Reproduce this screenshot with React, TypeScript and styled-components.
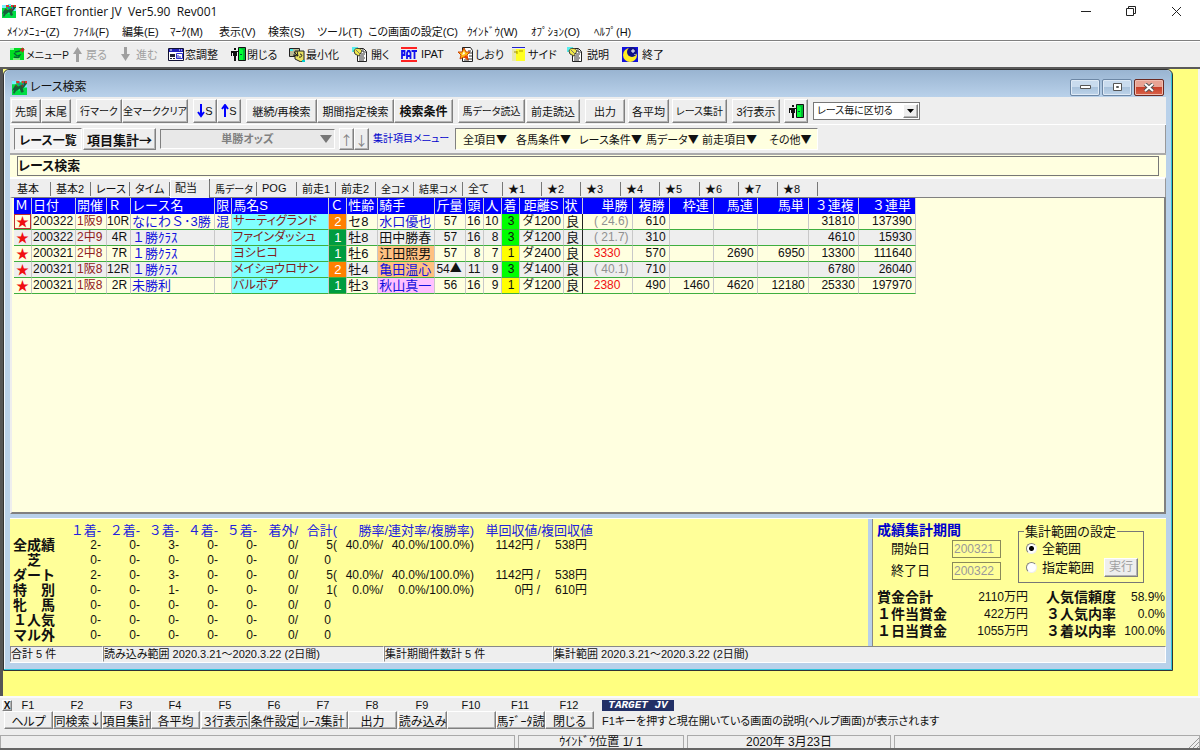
import React from "react";
import styled, { createGlobalStyle, css } from "styled-components";

const Global = createGlobalStyle`
  * { box-sizing: border-box; }
  html, body { margin: 0; padding: 0; }
  body, button, input, select {
    font-family: "Liberation Sans", "Noto Sans CJK JP", sans-serif;
    font-size: 11px;
    color: #111;
    font-feature-settings: "palt";
  }
  button { padding: 0; margin: 0; white-space: nowrap; cursor: default; }
`;

/* ---------- shared pieces ---------- */

const raised = css`
  border: 1px solid;
  border-color: #fff #808080 #808080 #fff;
  box-shadow: inset -1px -1px 0 #b4b4b4;
`;
const sunken = css`
  border: 1px solid;
  border-color: #808080 #fff #fff #808080;
`;

/* full-width arrows and triangles */
const Glyph = styled.span`
  font-family: "Noto Sans CJK JP", sans-serif;
  font-feature-settings: normal;
  line-height: 1;
`;
const withGlyph = (text: string) =>
  text.split(/([▼▲→↑↓])/).map((part, i) => (i % 2 ? <Glyph key={i}>{part}</Glyph> : part));

const Screen = styled.div`
  min-height: 100vh;
  display: flex;
  flex-direction: column;
  background: #eee;
  overflow: hidden;
  line-height: 16px;
`;

/* ---------- application frame ---------- */

const AppTitle = styled.header`
  height: 22px;
  display: flex;
  align-items: center;
  gap: 3px;
  padding-left: 2px;
  background: #fff;
`;
const AppName = styled.h1`
  flex: 1;
  margin: 0;
  font: 12px "Open Sans", "Noto Sans", sans-serif;
  white-space: pre;
  font-feature-settings: normal;
`;
const Caption = styled.button`
  width: 43px;
  height: 22px;
  border: 0;
  background: none;
  display: grid;
  place-items: center;
`;
const CaptionButtons = styled.div`
  display: flex;
  gap: 2px;
  padding-right: 2px;
`;
const MenuBar = styled.nav`
  height: 18px;
  display: flex;
  align-items: center;
  padding-left: 7px;
  background: #fff;
`;
const MenuItem = styled.button<{ $w: number }>`
  width: ${(p) => p.$w}px;
  flex: none;
  border: 0;
  background: none;
  text-align: left;
`;
const ToolBar = styled.div`
  height: 29px;
  display: flex;
  align-items: center;
  padding-left: 10px;
  border-top: 1px solid #808080;
  border-bottom: 2px solid #5a5a5a;
  box-shadow: inset 0 1px 0 #fff;
`;
const ToolItem = styled.button<{ $w: number; $gap?: number; $small?: boolean }>`
  width: ${(p) => p.$w}px;
  flex: none;
  display: flex;
  align-items: center;
  gap: ${(p) => p.$gap ?? 1}px;
  border: 0;
  background: none;
  font-size: ${(p) => (p.$small ? 10 : 11)}px;
  &:disabled { color: #a0a0a0; }
`;
const Workspace = styled.main`
  flex: 1;
  display: flex;
  background: #ffff80;
  border-left: 3px solid #555;
  border-right: 2px solid #f4f4f4;
  padding: 0 25px 25px 0;
`;

/* ---------- inner window ---------- */

const Window = styled.section`
  flex: 1;
  min-width: 0;
  display: flex;
  flex-direction: column;
  background: #b9d1ea;
  border: 1px solid #333;
  border-radius: 6px 6px 0 0;
  box-shadow: inset -1px -1px 0 #2fc4dc, inset 1px 1px 0 #eef5fc;
  padding: 0 6px 7px;
`;
const WindowTitle = styled.header`
  height: 27px;
  margin: 0 -5px;
  padding: 7px 7px 0 7px;
  display: flex;
  align-items: center;
  gap: 3px;
  background: linear-gradient(#99b4d1, #b9d1ea);
  border-radius: 5px 5px 0 0;
`;
const WindowName = styled.h2`
  flex: 1;
  margin: 0;
  font-size: 12px;
  font-weight: 400;
`;
const WinButton = styled.button<{ $close?: boolean }>`
  width: 30px;
  height: 17px;
  display: grid;
  place-items: center;
  border: 1px solid ${(p) => (p.$close ? "#6b2a22" : "#6d87a5")};
  border-radius: 2px;
  background: ${(p) =>
    p.$close
      ? "linear-gradient(#e8a393 45%, #c8402a 50%, #d9634b)"
      : "linear-gradient(#c9dbee 45%, #a9c2dc 50%, #bed4ea)"};
  box-shadow: inset 0 0 0 1px ${(p) => (p.$close ? "#f0bdb0" : "#dfeaf6")};
`;
const CaptionGroup = styled.div`
  display: flex;
  gap: 2px;
`;
const Band = styled.div`
  flex: none;
  display: flex;
  align-items: center;
  background: #eee;
`;
const ButtonBand = styled(Band)`
  height: 28px;
  padding-left: 1px;
  gap: 5px;
  border-bottom: 1px solid #fff;
`;
const Group = styled.div<{ $gap?: number }>`
  display: flex;
  flex: none;
  gap: ${(p) => p.$gap ?? 0}px;
`;
const Push = styled.button<{ $w: number; $bold?: boolean; $small?: boolean }>`
  ${raised}
  width: ${(p) => p.$w}px;
  height: 24px;
  flex: none;
  display: flex;
  align-items: center;
  justify-content: center;
  background: #eee;
  font-size: ${(p) => (p.$bold ? 12 : p.$small ? 10 : 11)}px;
  font-weight: ${(p) => (p.$bold ? 700 : 400)};
`;
const SelectBox = styled.label`
  position: relative;
  display: block;
  flex: none;
`;
const GroupingSelect = styled.select`
  appearance: none;
  width: 107px;
  height: 18px;
  padding: 0 18px 0 3px;
  background: #fff;
  border: 1px solid #777;
  border-radius: 0;
  font-size: 10px;
`;
const DropArrow = styled.span`
  ${raised}
  position: absolute;
  top: 2px;
  right: 2px;
  width: 15px;
  height: 14px;
  display: grid;
  place-items: center;
  background: #eee;
  pointer-events: none;
`;
const ModeBand = styled(Band)`
  height: 28px;
  padding-left: 4px;
  gap: 4px;
  border-right: 1px solid #999;
`;
const ModeButton = styled.button<{ $w: number; $on?: boolean }>`
  ${(p) => (p.$on ? sunken : raised)}
  width: ${(p) => p.$w}px;
  height: 22px;
  flex: none;
  display: flex;
  align-items: center;
  justify-content: center;
  background: ${(p) => (p.$on ? "#f4f4f4" : "#eee")};
  font-size: ${(p) => (p.$on ? 12 : 13)}px;
  font-weight: 700;
`;
const OddsSelect = styled.select`
  ${sunken}
  appearance: none;
  width: 175px;
  height: 20px;
  border-radius: 0;
  background: #e8e8e8;
  text-align: center;
  text-align-last: center;
  font-weight: 700;
  color: #808080;
  opacity: 1;
`;
const OddsArrow = styled.span`
  position: absolute;
  right: 3px;
  top: 6px;
  line-height: 0;
  pointer-events: none;
`;
const StepButton = styled.button`
  ${raised}
  display: grid;
  place-items: center;
  width: 15px;
  height: 22px;
  background: #eee;
  font-size: 13px;
  &:disabled { color: #808080; }
`;
const MenuCaption = styled.span`
  width: 78px;
  color: #00c;
  font-size: 10px;
  white-space: nowrap;
`;
const FieldMenu = styled.div`
  ${sunken}
  display: flex;
  align-items: center;
  height: 22px;
  padding-left: 7px;
  background: #ffffe0;
`;
const FieldMenuItem = styled.button<{ $w: number }>`
  width: ${(p) => p.$w}px;
  flex: none;
  border: 0;
  background: none;
  text-align: left;
`;
const ConditionBand = styled.div`
  flex: none;
  padding: 1px 7px 1px 7px;
  background: #ffffe0;
  border-top: 2px solid #aaa;
`;
const Condition = styled.div`
  height: 20px;
  border: 1px solid #777;
  font-size: 13px;
  font-weight: 700;
  line-height: 17px;
`;
const TabBand = styled(Band)`
  height: 20px;
  padding-left: 2px;
  border-top: 2px solid #fff;
  border-right: 1px solid #999;
`;
const Tab = styled.button<{ $w: number; $on?: boolean; $small?: boolean }>`
  position: relative;
  width: ${(p) => p.$w}px;
  height: ${(p) => (p.$on ? 19 : 17)}px;
  flex: none;
  padding-left: 5px;
  padding-bottom: ${(p) => (p.$on ? 3 : 0)}px;
  border: 0;
  background: #eee;
  text-align: left;
  font-size: ${(p) => (p.$small ? 10 : 11)}px;
  box-shadow: ${(p) => (p.$on ? "inset -1px 0 0 #666, inset 1px 1px 0 #fff" : "none")};
  &::after {
    content: "";
    position: absolute;
    right: 0;
    top: 2px;
    height: 14px;
    border-right: 1px solid #777;
  }
`;

/* ---------- race grid ---------- */

const GridPane = styled.div`
  flex: 1;
  min-height: 0;
  padding-left: 2px;
  background: #ffffe0;
  border: solid #808080;
  border-width: 1px 2px 2px 2px;
  border-left-color: #eee;
`;
const Grid = styled.table`
  width: 902px;
  table-layout: fixed;
  border-collapse: separate;
  border-spacing: 0;
  font-size: 13px;
  font-feature-settings: normal;
`;
const Th = styled.th<{ $right?: boolean }>`
  height: 16px;
  padding: 0 ${(p) => (p.$right ? 4 : 0)}px 0 1px;
  white-space: nowrap;
  background: #00f;
  color: #fff;
  font-weight: 400;
  line-height: 16px;
  text-align: ${(p) => (p.$right ? "right" : "left")};
  border-right: 1px solid #ccd;
`;
const GridRow = styled.tr`
  height: 16px;
  background: #ffffe0;
  &:nth-child(even) { background: #eee; }
`;
type CellProps = { $a?: "right" | "center"; $c?: string; $bg?: string; $rule?: boolean; $fit?: boolean };
const Td = styled.td<CellProps>`
  height: 16px;
  padding: 0 ${(p) => (p.$a === "right" ? 3 : 0)}px 0 ${(p) => (p.$a ? 0 : 1)}px;
  white-space: pre;
  line-height: 15px;
  text-align: ${(p) => p.$a ?? "left"};
  color: ${(p) => p.$c ?? "#111"};
  background: ${(p) => p.$bg ?? "transparent"};
  font-size: ${(p) => (p.$fit ? 12 : 13)}px;
  font-feature-settings: ${(p) => (p.$fit ? '"palt"' : "normal")};
  border-right: 1px solid ${(p) => (p.$rule ? "#222" : "#c8c8c8")};
  border-bottom: 1px solid #3fae3f;
`;
const Num = styled(Td)`
  font-size: 12px;
`;
const Mark = styled.span<{ $cursor?: boolean }>`
  display: block;
  height: 15px;
  line-height: 13px;
  color: #f01010;
  border: 1px solid ${(p) => (p.$cursor ? "#c03030" : "transparent")};
`;

/* ---------- totals ---------- */

const Totals = styled.div`
  flex: none;
  display: flex;
  gap: 4px;
  margin-top: 4px;
  border-top: 1px solid #fff;
`;
const StatsPane = styled.div`
  flex: 1;
  min-width: 0;
  height: 127px;
  padding-top: 4px;
  background: #ff9;
`;
const Stats = styled.table`
  width: 583px;
  table-layout: fixed;
  border-collapse: collapse;
  font-size: 12px;
  font-feature-settings: normal;
  white-space: nowrap;
`;
const StatHead = styled.th`
  height: 15px;
  padding: 0;
  text-align: right;
  font-size: 13px;
  font-weight: 400;
  line-height: 15px;
  color: #22d;
`;
const StatName = styled.th`
  height: 15px;
  padding: 0 0 0 3px;
  font-size: 14px;
  line-height: 15px;
  text-align: left;
  white-space: pre;
`;
const Stat = styled.td<{ $open?: boolean }>`
  height: 15px;
  padding: 0 ${(p) => (p.$open ? 6 : 0)}px 0 0;
  text-align: right;
  line-height: 15px;
`;
const PeriodPane = styled.div`
  width: 294px;
  height: 127px;
  flex: none;
  padding: 3px 0 0 4px;
  background: #ff9;
  border-left: 1px solid #888;
  font-size: 12px;
  font-feature-settings: normal;
`;
const PeriodTop = styled.div`
  display: flex;
  justify-content: space-between;
  padding-right: 22px;
  height: 66px;
`;
const PeriodTitle = styled.h3`
  margin: 0;
  font-size: 14px;
  line-height: 16px;
  color: #00c;
`;
const DateField = styled.label`
  display: flex;
  justify-content: space-between;
  align-items: center;
  width: 124px;
  height: 22px;
  padding-left: 14px;
  font-size: 13px;
`;
const DateInput = styled.input`
  width: 49px;
  height: 18px;
  padding: 0 1px;
  border: 1px solid #8a8a5a;
  border-radius: 0;
  background: #ff9;
  color: #999;
  font-size: 12px;
  font-feature-settings: normal;
`;
const RangeSet = styled.fieldset`
  width: 126px;
  height: 59px;
  margin: 2px 0 0;
  padding: 0 0 0 7px;
  border: 1px solid #777;
`;
const RangeLegend = styled.legend`
  height: 15px;
  margin-left: -2px;
  padding: 0 1px;
  font-size: 13px;
  line-height: 15px;
  white-space: nowrap;
`;
const RangeRow = styled.div`
  display: flex;
  align-items: center;
  justify-content: space-between;
  height: 19px;
  padding-right: 5px;
  font-size: 13px;
`;
const RangeChoice = styled.label`
  display: flex;
  align-items: center;
  gap: 5px;
  white-space: nowrap;
`;
const Radio = styled.input`
  appearance: none;
  width: 11px;
  height: 11px;
  margin: 0;
  border: 1px solid;
  border-color: #808080 #eee #eee #808080;
  border-radius: 50%;
  background: #fff;
  &:checked { background: radial-gradient(#000 0 2px, #fff 3px); }
`;
const RunButton = styled.button`
  ${raised}
  width: 34px;
  height: 19px;
  background: #eee;
  font-size: 12px;
  line-height: 15px;
  &:disabled { color: #a0a0a0; }
`;
const Prize = styled.table`
  width: 100%;
  margin-top: 1px;
  table-layout: fixed;
  border-collapse: collapse;
  white-space: nowrap;
`;
const PrizeName = styled.th`
  height: 17px;
  padding: 0;
  text-align: left;
  font-size: 14px;
  line-height: 17px;
`;
const PrizeValue = styled.td<{ $end?: boolean }>`
  height: 17px;
  padding: 0 ${(p) => (p.$end ? 1 : 18)}px 0 0;
  text-align: right;
  line-height: 17px;
  font-size: 12px;
`;
const StatusBand = styled.footer`
  flex: none;
  display: flex;
  height: 17px;
  background: #eee;
  border-bottom: 1px solid #fff;
`;
const StatusCell = styled.span<{ $w?: number }>`
  ${(p) => (p.$w ? css`flex: none; width: ${p.$w}px;` : css`flex: 1;`)}
  border: 1px solid;
  border-color: #888 #fff #eee #888;
  line-height: 15px;
  white-space: pre;
`;

/* ---------- function keys ---------- */

const KeyBand = styled.div`
  flex: none;
  display: flex;
  height: 39px;
  padding: 2px 0 0 4px;
  border-top: 2px solid #fafafa;
`;
const KeyGroup = styled.div`
  display: flex;
  flex: none;
  margin-right: 1px;
`;
const KeyCell = styled.label`
  position: relative;
  display: flex;
  flex-direction: column;
  align-items: center;
  width: 49px;
  line-height: 11px;
`;
const KeyName = styled.span`
  padding-right: 1px;
`;
const KeyButton = styled.button`
  ${raised}
  width: 49px;
  height: 18px;
  display: flex;
  align-items: center;
  justify-content: center;
  background: #eee;
  font-size: 12px;
`;
const CloseKeys = styled.button`
  ${raised}
  position: absolute;
  left: -2px;
  top: 0;
  width: 10px;
  height: 11px;
  background: #eee;
  font-size: 10px;
  font-weight: 700;
  line-height: 9px;
`;
const Help = styled.div`
  display: flex;
  flex-direction: column;
  padding-left: 7px;
  gap: 2px;
`;
const Brand = styled.strong`
  width: 72px;
  height: 11px;
  background: #223066;
  color: #fff;
  font: italic 700 11px/11px "Liberation Mono", monospace;
  text-align: center;
  white-space: pre;
`;
const FootBar = styled.footer`
  flex: none;
  display: flex;
  gap: 3px;
  height: 15px;
  border-bottom: 2px solid #666;
`;
const FootCell = styled.span<{ $w?: number }>`
  ${(p) => (p.$w ? css`flex: none; width: ${p.$w}px;` : css`flex: 1;`)}
  position: relative;
  border: solid #aaa;
  border-width: 1px 1px 0 1px;
  font-size: 12px;
  line-height: 13px;
  text-align: center;
  white-space: pre;
`;
const Grip = styled.svg`
  position: absolute;
  right: 0;
  bottom: 0;
`;

/* ---------- icons ---------- */

const HorseIcon = ({ size = 14 }: { size?: number }) => (
  <svg width={size} height={size} viewBox="0 0 14 14" aria-hidden="true">
    <path d="M0 1h14v13H0z" fill="#0d4" />
    <path d="M0 1h4v3H0zM11 4h3v3h-3zM6 0h3v2H6z" fill="#7ef" />
    <path d="M1 8l2-3 3 1 4-2 2-3 2 2-2 3-2 2 1 3-2 1-2-3-3 1-2 3-1-1 1-3-2 1z" fill="#17603a" />
    <path d="M3 4l2 1-1 2zM8 5l3-1-1 3z" fill="#7a4020" />
    <path d="M4 1h3v2H4zM9 1h2v2H9zM12 1h2v2h-2z" fill="#d33" />
    <path d="M6 3h2v2H6zM10 3h1v2h-1z" fill="#36c" />
    <path d="M5 10l2-2 1 2zM2 11l1-1" fill="#0f6" />
  </svg>
);
const MenuIcon = () => (
  <svg width="15" height="14" viewBox="0 0 15 14" aria-hidden="true">
    <path d="M0 1h14v12H0z" fill="#0d2" />
    <path d="M0 1h4v2H0z" fill="#9fa" />
    <path d="M5 5l5-1M4 6l3 3 3-1-2 3-4-1" stroke="#063" strokeWidth="1.3" fill="none" />
    <path d="M10 4l3-3M12 5l2-3" stroke="#c22" strokeWidth="1.6" />
    <path d="M3 12h7" stroke="#dfb" />
  </svg>
);
const NavArrow = ({ down }: { down?: boolean }) => (
  <svg width="11" height="15" viewBox="0 0 11 15" aria-hidden="true">
    <path
      d={down ? "M4 0h3v7h3l-4.500 7L1 7h3z" : "M5.500 0L10 7H7v8H4V7H1z"}
      fill="#a0a0a0"
    />
  </svg>
);
const WindowsIcon = () => (
  <svg width="16" height="13" viewBox="0 0 16 13" aria-hidden="true">
    <path d="M.5.5h15v12H.5z" fill="#fff" stroke="#113" />
    <path d="M1 1h14v3H1z" fill="#22b" />
    <path d="M2 2h2M11 2h1M13 2h1" stroke="#fff" />
    <path d="M2 6h5v3H2zM2 10h2v1H2zM5 10h2v1H5z" fill="#223" />
    <path d="M8.500 5.500h6v5h-6z" fill="#fff" stroke="#33c" />
    <path d="M10 7v3M12 8v2" stroke="#22b" />
  </svg>
);
const DoorIcon = () => (
  <svg width="15" height="14" viewBox="0 0 15 14" aria-hidden="true">
    <path d="M3 1h2v2H3zM0 4h7v1H6v4H5v5H4V9v5H3V9H2V6H1v3H0z" fill="#111" />
    <path d="M7.500.5h7v13h-7z" fill="#0b3" stroke="#111" />
    <path d="M8 1l4 2v10l-4 0z" fill="#0f3" />
    <path d="M9 7h2v1H9z" fill="#053" />
  </svg>
);
const MinimizeIcon = () => (
  <svg width="16" height="15" viewBox="0 0 16 15" aria-hidden="true">
    <path d="M.5 1.500h10v8H.5z" fill="#bb9" stroke="#222" />
    <path d="M1 2h3v2H1z" fill="#4ee" />
    <path d="M6 4h9v9l-3 2-6-3z" fill="#e8e060" stroke="#222" />
    <path d="M5 5l4 4M8 4l1 5-5-1M11 7c3 0 2 4-1 3" stroke="#222" fill="none" />
    <path d="M13 13h3v2h-3z" fill="#0cc" />
  </svg>
);
const ScrollIcon = () => (
  <svg width="16" height="15" viewBox="0 0 16 15" aria-hidden="true">
    <path d="M0 0h6v5H0z" fill="#5ee" />
    <path d="M5.500 1.500h6l3 3v10h-9z" fill="#fff" stroke="#222" />
    <path d="M11 2v3h3M7 9h5M7 11h6M7 13h5M9 7h4" stroke="#333" fill="none" />
    <path d="M2 4c1-4 7-3 8 0l-3 5-4-2z" fill="#f0e84a" stroke="#443" />
    <path d="M4 3l4 4" stroke="#776" />
  </svg>
);
const PatIcon = () => (
  <svg width="16" height="15" viewBox="0 0 16 15" aria-hidden="true">
    <path d="M0 0h16v2H0zM0 13h16v2H0z" fill="#f22" />
    <path d="M1 12V4h2.500v4H1M6 12V6l1-2h1.500l1 2v6M6 9h3.500M10.500 4H16M13.500 4v8" stroke="#11e" strokeWidth="1.800" fill="none" />
  </svg>
);
const BookmarkIcon = () => (
  <svg width="16" height="15" viewBox="0 0 16 15" aria-hidden="true">
    <path d="M4.500.5h8l2 3v11h-10z" fill="#fff" stroke="#222" />
    <path d="M10 4h3M11 6h3M9 12h5M11 9h3M6 13h5" stroke="#333" />
    <path d="M6 1l2 4 4 0-3 3 1 5-4-3-4 2 1-4-3-3h4z" fill="#fb1" stroke="#c40" />
    <path d="M6 4l1 3-3 1z" fill="#ffe" />
    <path d="M8 8l2 4-4-2z" fill="#e30" />
  </svg>
);
const SideIcon = () => (
  <svg width="13" height="14" viewBox="0 0 13 14" aria-hidden="true">
    <path d="M0 0h13v1H0z" fill="#22c" />
    <path d="M0 2h13v12H0z" fill="#ff2" />
    <path d="M0 2h4v12H0z" fill="#e8e8b0" />
    <path d="M2 5h3M7 4h4M5 4v3" stroke="#a90" />
  </svg>
);
const MoonIcon = () => (
  <svg width="16" height="15" viewBox="0 0 16 15" aria-hidden="true">
    <path d="M0 0h16v15H0z" fill="#11d" />
    <circle cx="8" cy="8" r="7" fill="#fe2" />
    <circle cx="10" cy="5" r="5" fill="#118" />
    <path d="M11 2v4M9 4h4M13 7v1" stroke="#fff" />
  </svg>
);
const BlueArrow = ({ up }: { up?: boolean }) => (
  <svg width="8" height="14" viewBox="0 0 8 14" aria-hidden="true">
    <path d={up ? "M4 13V2M1 5l3-4 3 4" : "M4 0v12M1 8l3 4 3-4"} stroke="#00f" strokeWidth="2" fill="none" />
  </svg>
);

/* ---------- data ---------- */

const menus: [string, number][] = [
  ["ﾒｲﾝﾒﾆｭｰ(Z)", 66], ["ﾌｧｲﾙ(F)", 49], ["編集(E)", 48], ["ﾏｰｸ(M)", 49], ["表示(V)", 49], ["検索(S)", 49],
  ["ツール(T)", 51], ["この画面の設定(C)", 99], ["ｳｲﾝﾄﾞｳ(W)", 64], ["ｵﾌﾟｼｮﾝ(O)", 63], ["ﾍﾙﾌﾟ(H)", 50],
];

const tools: { text: string; w: number; icon: React.ReactNode; gap?: number; off?: boolean; small?: boolean }[] = [
  { text: "メニューP", w: 62, icon: <MenuIcon />, small: true },
  { text: "戻る", w: 48, icon: <NavArrow />, gap: 3, off: true },
  { text: "進む", w: 48, icon: <NavArrow down />, gap: 5, off: true },
  { text: "窓調整", w: 63, icon: <WindowsIcon /> },
  { text: "閉じる", w: 58, icon: <DoorIcon /> },
  { text: "最小化", w: 63, icon: <MinimizeIcon /> },
  { text: "開く", w: 49, icon: <ScrollIcon />, gap: 3 },
  { text: "IPAT", w: 57, icon: <PatIcon />, gap: 4 },
  { text: "しおり", w: 54, icon: <BookmarkIcon /> },
  { text: "サイド", w: 55, icon: <SideIcon />, gap: 3 },
  { text: "説明", w: 55, icon: <ScrollIcon />, gap: 4 },
  { text: "終了", w: 44, icon: <MoonIcon />, gap: 4 },
];

const fieldMenus: [string, number][] = [
  ["全項目▼", 53], ["各馬条件▼", 63], ["レース条件▼", 67], ["馬データ▼", 56], ["前走項目▼", 67], ["その他▼", 48],
];

const tabs: [string, number, boolean?][] = [
  ["基本", 39], ["基本2", 40], ["レース", 39], ["タイム", 40], ["配当", 40], ["馬データ", 47, true], ["POG", 40],
  ["前走1", 39], ["前走2", 40], ["全コメ", 38, true], ["結果コメ", 49, true], ["全て", 40], ["★1", 39], ["★2", 39],
  ["★3", 40], ["★4", 39], ["★5", 40], ["★6", 39], ["★7", 39], ["★8", 40],
];

const columns: [string, number, boolean?][] = [
  ["Ｍ", 18], ["日付", 44], ["開催", 31], ["Ｒ", 24], ["レース名", 84], ["限", 17], ["馬名S", 97], ["Ｃ", 18],
  ["性齢", 31], ["騎手", 57], ["斤量", 31], ["頭", 18], ["人", 18], ["着", 18], ["距離S", 43, true], ["状", 19],
  ["単勝", 50, true], ["複勝", 37, true], ["枠連", 44, true], ["馬連", 44, true], ["馬単", 51, true],
  ["３連複", 50, true], ["３連単", 57, true],
];

type Race = {
  date: string; meet: string; no: string; name: string; limit?: string; horse: string; corner: number; sex: string;
  jockey: string; jc?: string; jbg?: string; weight: string; runners: number; pop: number; place: number;
  dist: string; win: string; hit?: boolean; show: string; pay: string[];
};
const races: Race[] = [
  { date: "200322", meet: "1阪9", no: "10R", name: "なにわＳ･3勝", limit: "混", horse: "サーティグランド", corner: 2, sex: "セ8", jockey: "水口優也", jc: "#11d", weight: "57", runners: 16, pop: 10, place: 3, dist: "ダ1200", win: "( 24.6)", show: "610", pay: ["", "", "", "31810", "137390"] },
  { date: "200322", meet: "2中9", no: "4R", name: "１勝ｸﾗｽ", horse: "ファインダッシュ", corner: 1, sex: "牡8", jockey: "田中勝春", weight: "57", runners: 16, pop: 8, place: 3, dist: "ダ1200", win: "( 21.7)", show: "310", pay: ["", "", "", "4610", "15930"] },
  { date: "200321", meet: "2中8", no: "7R", name: "１勝ｸﾗｽ", horse: "ヨシヒコ", corner: 1, sex: "牡6", jockey: "江田照男", jbg: "#ffc080", weight: "57", runners: 8, pop: 7, place: 1, dist: "ダ2400", win: "3330", hit: true, show: "570", pay: ["", "2690", "6950", "13300", "111640"] },
  { date: "200321", meet: "1阪8", no: "12R", name: "１勝ｸﾗｽ", horse: "メイショウロサン", corner: 2, sex: "牡4", jockey: "亀田温心", jc: "#11d", jbg: "#ffc080", weight: "54▲", runners: 11, pop: 9, place: 3, dist: "ダ1400", win: "( 40.1)", show: "710", pay: ["", "", "", "6780", "26040"] },
  { date: "200321", meet: "1阪8", no: "2R", name: "未勝利", horse: "バルボア", corner: 1, sex: "牡3", jockey: "秋山真一", jc: "#11d", jbg: "#ffc0ff", weight: "56", runners: 16, pop: 9, place: 1, dist: "ダ1200", win: "2380", hit: true, show: "490", pay: ["1460", "4620", "12180", "25330", "197970"] },
];

const statWidths = [52, 39, 39, 39, 39, 39, 41, 39, 46, 46, 45, 66, 53];
const stats: { name: string; n: number[]; total: string; rate?: string[] }[] = [
  { name: "全成績", n: [2, 0, 3, 0, 0], total: "5", rate: ["40.0%/", "40.0%/", "100.0%)", "1142円 /", "538円"] },
  { name: "　芝", n: [0, 0, 0, 0, 0], total: "0" },
  { name: "ダート", n: [2, 0, 3, 0, 0], total: "5", rate: ["40.0%/", "40.0%/", "100.0%)", "1142円 /", "538円"] },
  { name: "特　別", n: [0, 0, 1, 0, 0], total: "1", rate: ["0.0%/", "0.0%/", "100.0%)", "0円 /", "610円"] },
  { name: "牝　馬", n: [0, 0, 0, 0, 0], total: "0" },
  { name: "１人気", n: [0, 0, 0, 0, 0], total: "0" },
  { name: "マル外", n: [0, 0, 0, 0, 0], total: "0" },
];

const prizes = [
  ["賞金合計", "2110万円", "人気信頼度", "58.9%"],
  ["１件当賞金", "422万円", "３人気内率", "0.0%"],
  ["１日当賞金", "1055万円", "３着以内率", "100.0%"],
];

const keys = [
  ["ヘルプ", "同検索↓", "項目集計", "各平均"],
  ["３行表示", "条件設定", "ﾚｰｽ集計", "出力"],
  ["読み込み", "", "馬ﾃﾞｰﾀ読", "閉じる"],
];

/* ---------- parts ---------- */

function RaceGrid() {
  return (
    <Grid>
      <colgroup>
        {columns.map(([name, w]) => <col key={name} width={w} />)}
      </colgroup>
      <thead>
        <tr>
          {columns.map(([name, , right]) => <Th key={name} $right={right}>{name}</Th>)}
        </tr>
      </thead>
      <tbody>
        {races.map((r, i) => (
          <GridRow key={r.horse}>
            <Td $a="center"><Mark $cursor={i === 0}>★</Mark></Td>
            <Num>{r.date}</Num>
            <Num $c="#902020">{r.meet}</Num>
            <Num $a="right">{r.no}</Num>
            <Td $c="#11d">{r.name}</Td>
            <Td $c="#11d">{r.limit}</Td>
            <Td $fit $c="#802020" $bg="#80ffff">{r.horse}</Td>
            <Td $a="center" $c="#fff" $bg={r.corner === 2 ? "#ff8000" : "#009c40"}>{r.corner}</Td>
            <Td>{r.sex}</Td>
            <Td $c={r.jc} $bg={r.jbg}>{r.jockey}</Td>
            <Num $a={r.weight.length > 2 ? undefined : "center"}>{withGlyph(r.weight)}</Num>
            <Num $a="right">{r.runners}</Num>
            <Num $a="right">{r.pop}</Num>
            <Num $a="center" $bg={r.place === 1 ? "#ff0" : "#0f0"}>{r.place}</Num>
            <Num $a="center">{r.dist}</Num>
            <Td $a="center" $rule>良</Td>
            <Num $a={r.hit ? "center" : "right"} $c={r.hit ? "#f01010" : "#909090"}>{r.win}</Num>
            <Num $a="right">{r.show}</Num>
            {r.pay.map((p, k) => <Num key={k} $a="right">{p}</Num>)}
          </GridRow>
        ))}
      </tbody>
    </Grid>
  );
}

function StatTable() {
  return (
    <Stats>
      <colgroup>
        {statWidths.map((w, i) => <col key={i} width={w} />)}
      </colgroup>
      <thead>
        <tr>
          <td />
          {["１着-", "２着-", "３着-", "４着-", "５着-", "着外/", "合計("].map((h) => <StatHead key={h}>{h}</StatHead>)}
          <StatHead colSpan={3}>勝率/連対率/複勝率)</StatHead>
          <StatHead colSpan={2}>単回収値/複回収値</StatHead>
        </tr>
      </thead>
      <tbody>
        {stats.map((s) => (
          <tr key={s.name}>
            <StatName scope="row">{s.name}</StatName>
            {s.n.map((n, i) => <Stat key={i}>{n}-</Stat>)}
            <Stat>0/</Stat>
            <Stat $open={!s.rate}>{s.total}{s.rate && "("}</Stat>
            {s.rate?.map((v, i) => <Stat key={i} $open={i === 4}>{v}</Stat>)}
          </tr>
        ))}
      </tbody>
    </Stats>
  );
}

export default function App() {
  return (
    <Screen>
      <Global />
      <AppTitle>
        <HorseIcon />
        <AppName>TARGET frontier JV  Ver5.90  Rev001</AppName>
        <CaptionButtons>
          <Caption aria-label="最小化"><svg width="11" height="11"><path d="M0 5.500h10" stroke="#222" /></svg></Caption>
          <Caption aria-label="元に戻す"><svg width="11" height="11"><path d="M.5 2.500h7v7h-7zM2.500 2V.5h7v7H8" stroke="#222" fill="none" /></svg></Caption>
          <Caption aria-label="閉じる"><svg width="11" height="11"><path d="M1 1l9 9M10 1l-9 9" stroke="#222" /></svg></Caption>
        </CaptionButtons>
      </AppTitle>
      <MenuBar>
        {menus.map(([t, w]) => <MenuItem key={t} $w={w}>{t}</MenuItem>)}
      </MenuBar>
      <ToolBar>
        {tools.map((t) => (
          <ToolItem key={t.text} $w={t.w} $gap={t.gap} $small={t.small} disabled={t.off}>{t.icon}{t.text}</ToolItem>
        ))}
      </ToolBar>

      <Workspace>
        <Window>
          <WindowTitle>
            <HorseIcon size={15} />
            <WindowName>レース検索</WindowName>
            <CaptionGroup>
              <WinButton aria-label="最小化"><svg width="11" height="5"><path d="M.5.5h10v3H.5z" fill="#fff" stroke="#555" /></svg></WinButton>
              <WinButton aria-label="最大化"><svg width="11" height="9"><path d="M1.500.5h8v7h-8zM4.500 3.500h2v1h-2z" fill="#fff" stroke="#555" /></svg></WinButton>
              <WinButton $close aria-label="閉じる"><svg width="12" height="9"><path d="M2 1l8 7M10 1L2 8" stroke="#555" strokeWidth="4" /><path d="M2 1l8 7M10 1L2 8" stroke="#fff" strokeWidth="2" /></svg></WinButton>
            </CaptionGroup>
          </WindowTitle>

          <ButtonBand>
            <Group><Push $w={30}>先頭</Push><Push $w={30}>末尾</Push></Group>
            <Group><Push $w={46} $small>行マーク</Push><Push $w={66} $small>全マーククリア</Push></Group>
            <Group>
              <Push $w={24}><BlueArrow />S</Push>
              <Push $w={24}><BlueArrow up />S</Push>
            </Group>
            <Group>
              <Push $w={71}>継続/再検索</Push>
              <Push $w={77}>期間指定検索</Push>
              <Push $w={59} $bold>検索条件</Push>
            </Group>
            <Group $gap={1}><Push $w={67} $small>馬データ読込</Push><Push $w={54}>前走読込</Push></Group>
            <Group $gap={3}><Push $w={40}>出力</Push><Push $w={41}>各平均</Push><Push $w={55} $small>レース集計</Push></Group>
            <Group $gap={4}><Push $w={48}>3行表示</Push><Push $w={24} aria-label="閉じる"><DoorIcon /></Push></Group>
            <SelectBox>
              <GroupingSelect aria-label="区切り"><option>レース毎に区切る</option></GroupingSelect>
              <DropArrow><svg width="7" height="4"><path d="M0 0h7L3.500 4z" /></svg></DropArrow>
            </SelectBox>
          </ButtonBand>

          <ModeBand>
            <Group $gap={1}><ModeButton $w={68} $on>レース一覧</ModeButton><ModeButton $w={73}>{withGlyph("項目集計→")}</ModeButton></Group>
            <SelectBox>
              <OddsSelect aria-label="集計項目" disabled><option>単勝オッズ</option></OddsSelect>
              <OddsArrow><svg width="12" height="8"><path d="M0 0h12L6 8z" fill="#777" /></svg></OddsArrow>
            </SelectBox>
            <Group><StepButton disabled>{withGlyph("↑")}</StepButton><StepButton disabled>{withGlyph("↓")}</StepButton></Group>
            <MenuCaption>集計項目メニュー</MenuCaption>
            <FieldMenu>
              {fieldMenus.map(([t, w]) => <FieldMenuItem key={t} $w={w}>{withGlyph(t)}</FieldMenuItem>)}
            </FieldMenu>
          </ModeBand>

          <ConditionBand><Condition>レース検索</Condition></ConditionBand>

          <TabBand role="tablist">
            {tabs.map(([t, w, small]) => (
              <Tab key={t} $w={w} $small={small} $on={t === "配当"} role="tab" aria-selected={t === "配当"}>{t}</Tab>
            ))}
          </TabBand>

          <GridPane><RaceGrid /></GridPane>

          <Totals>
            <StatsPane><StatTable /></StatsPane>
            <PeriodPane>
              <PeriodTop>
                <div>
                  <PeriodTitle>成績集計期間</PeriodTitle>
                  <DateField>開始日<DateInput defaultValue="200321" disabled /></DateField>
                  <DateField>終了日<DateInput defaultValue="200322" disabled /></DateField>
                </div>
                <RangeSet>
                  <RangeLegend>集計範囲の設定</RangeLegend>
                  <RangeRow><RangeChoice><Radio type="radio" name="range" defaultChecked />全範囲</RangeChoice></RangeRow>
                  <RangeRow>
                    <RangeChoice><Radio type="radio" name="range" />指定範囲</RangeChoice>
                    <RunButton disabled>実行</RunButton>
                  </RangeRow>
                </RangeSet>
              </PeriodTop>
              <Prize>
                <colgroup><col width={70} /><col width={99} /><col width={72} /><col /></colgroup>
                <tbody>
                  {prizes.map(([a, b, c, d]) => (
                    <tr key={a}>
                      <PrizeName scope="row">{a}</PrizeName><PrizeValue>{b}</PrizeValue>
                      <PrizeName>{c}</PrizeName><PrizeValue $end>{d}</PrizeValue>
                    </tr>
                  ))}
                </tbody>
              </Prize>
            </PeriodPane>
          </Totals>

          <StatusBand>
            <StatusCell $w={93}>合計 5 件</StatusCell>
            <StatusCell $w={281}>読み込み範囲 2020.3.21～2020.3.22 (2日間)</StatusCell>
            <StatusCell $w={169}>集計期間件数計 5 件</StatusCell>
            <StatusCell>集計範囲 2020.3.21～2020.3.22 (2日間)</StatusCell>
          </StatusBand>
        </Window>
      </Workspace>

      <KeyBand>
        {keys.map((group, g) => (
          <KeyGroup key={g}>
            {group.map((text, i) => (
              <KeyCell key={i}>
                {g + i === 0 && <CloseKeys aria-label="閉じる">X</CloseKeys>}
                <KeyName>F{g * 4 + i + 1}</KeyName>
                <KeyButton>{withGlyph(text)}</KeyButton>
              </KeyCell>
            ))}
          </KeyGroup>
        ))}
        <Help>
          <Brand>TARGET JV</Brand>
          <span>F1キーを押すと現在開いている画面の説明(ヘルプ画面)が表示されます</span>
        </Help>
      </KeyBand>
      <FootBar>
        <FootCell $w={515} />
        <FootCell $w={166}>ｳｲﾝﾄﾞｳ位置 1/ 1</FootCell>
        <FootCell $w={204}>2020年 3月23日</FootCell>
        <FootCell>
          <Grip width="12" height="12" aria-hidden="true"><path d="M2 12L12 2M6 12l6-6M10 12l2-2" stroke="#999" /></Grip>
        </FootCell>
      </FootBar>
    </Screen>
  );
}
